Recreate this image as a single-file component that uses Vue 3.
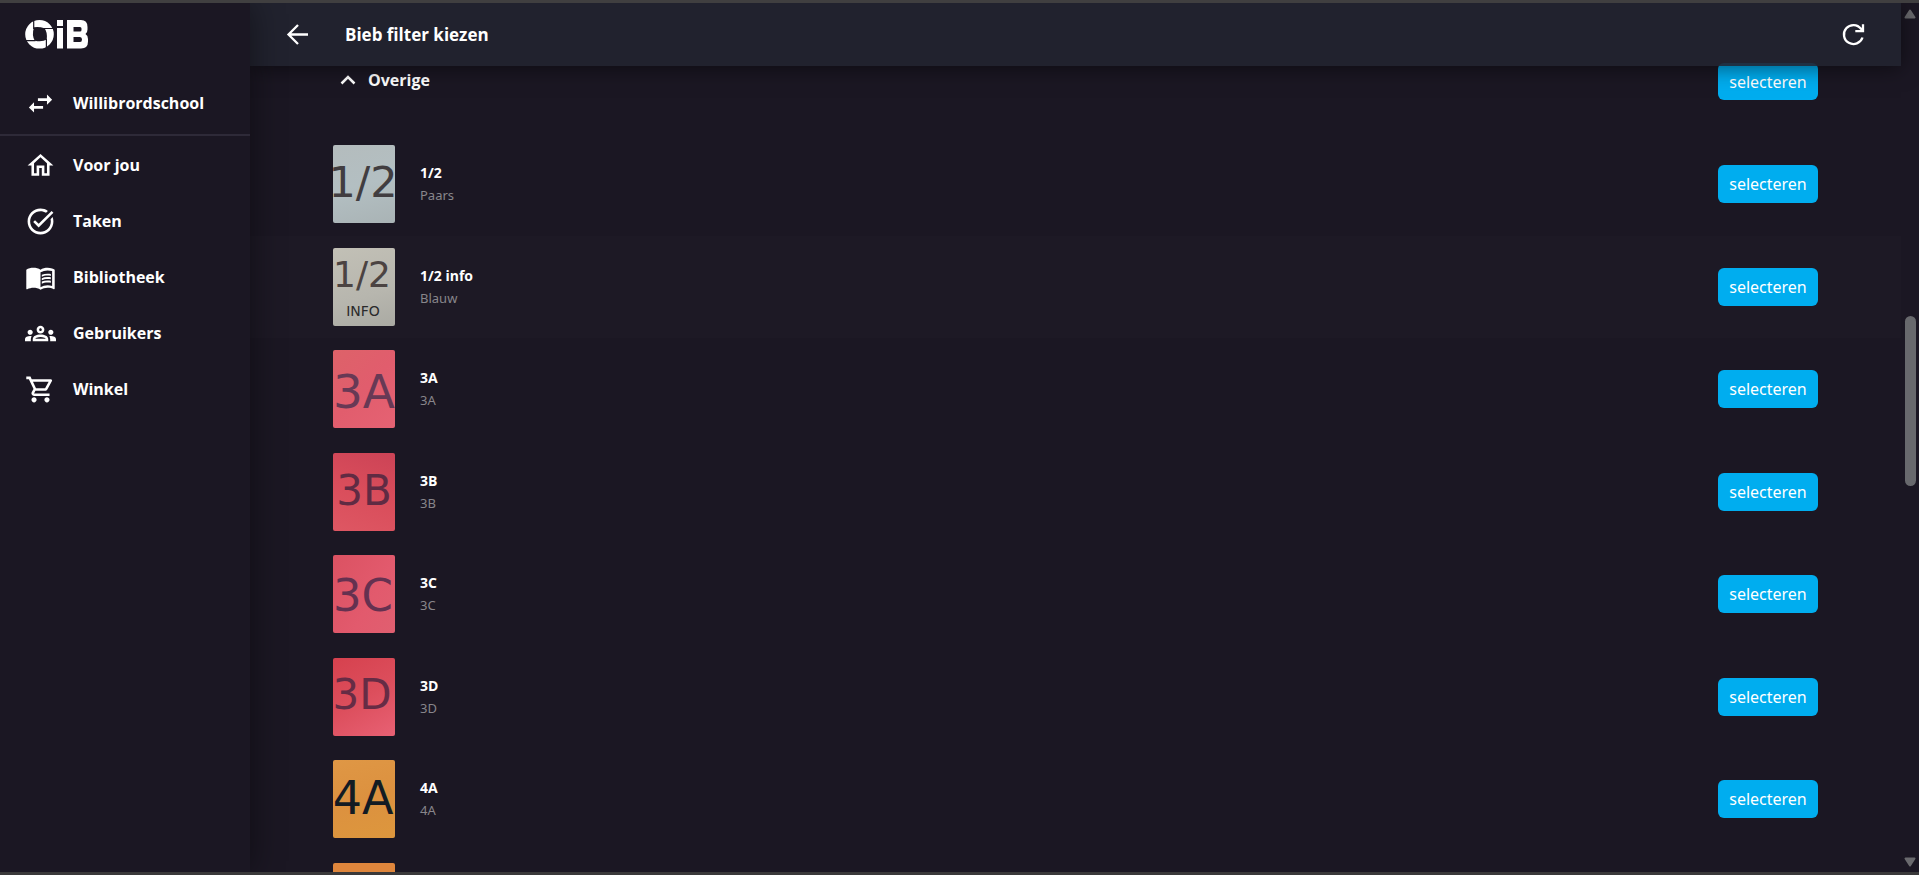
<script setup>
const nav = [
  {
    label: 'Voor jou',
    icon: 'M12 5.69l5 4.5V18h-2v-6H9v6H7v-7.81l5-4.5M12 3L2 12h3v8h6v-6h2v6h6v-8h3L12 3z',
  },
  {
    label: 'Taken',
    icon: 'M22 5.18L10.59 16.6l-4.24-4.24 1.41-1.41 2.83 2.83 10-10L22 5.18zm-2.21 5.04c.13.57.21 1.17.21 1.78 0 4.42-3.58 8-8 8s-8-3.58-8-8 3.58-8 8-8c1.58 0 3.04.46 4.28 1.25l1.44-1.44C16.1 2.67 14.13 2 12 2 6.48 2 2 6.48 2 12s4.48 10 10 10 10-4.48 10-10c0-1.19-.22-2.33-.6-3.39l-1.61 1.61z',
  },
  {
    label: 'Bibliotheek',
    icon: 'M21 5c-1.11-.35-2.33-.5-3.5-.5-1.95 0-4.05.4-5.5 1.5-1.45-1.1-3.55-1.5-5.5-1.5S2.45 4.9 1 6v14.65c0 .25.25.5.5.5.1 0 .15-.05.25-.05C3.1 20.45 5.05 20 6.5 20c1.95 0 4.05.4 5.5 1.5 1.35-.85 3.8-1.5 5.5-1.5 1.65 0 3.35.3 4.75 1.05.1.05.15.05.25.05.25 0 .5-.25.5-.5V6c-.6-.45-1.25-.75-2-1zm0 13.5c-1.1-.35-2.3-.5-3.5-.5-1.7 0-4.15.65-5.5 1.5V8c1.35-.85 3.8-1.5 5.5-1.5 1.2 0 2.4.15 3.5.5v11.5zM17.5 10.5c.88 0 1.73.09 2.5.26V9.24c-.79-.15-1.64-.24-2.5-.24-1.7 0-3.24.29-4.5.83v1.66c1.13-.64 2.7-.99 4.5-.99zM13 12.49v1.66c1.13-.64 2.7-.99 4.5-.99.88 0 1.73.09 2.5.26V11.9c-.79-.15-1.64-.24-2.5-.24-1.7 0-3.24.3-4.5.83zM17.5 14.33c-1.7 0-3.24.29-4.5.83v1.66c1.13-.64 2.7-.99 4.5-.99.88 0 1.73.09 2.5.26v-1.52c-.79-.16-1.64-.24-2.5-.24z',
  },
  {
    label: 'Gebruikers',
    icon: 'M4 13c1.1 0 2-.9 2-2s-.9-2-2-2-2 .9-2 2 .9 2 2 2zm1.13 1.1c-.37-.06-.74-.1-1.13-.1-.99 0-1.93.21-2.78.58C.48 14.9 0 15.62 0 16.43V18h4.5v-1.61c0-.83.23-1.61.63-2.29zM20 13c1.1 0 2-.9 2-2s-.9-2-2-2-2 .9-2 2 .9 2 2 2zm4 3.43c0-.81-.48-1.53-1.22-1.85-.85-.37-1.79-.58-2.78-.58-.39 0-.76.04-1.13.1.4.68.63 1.46.63 2.29V18H24v-1.57zM16.24 13.65c-1.17-.52-2.61-.9-4.24-.9-1.63 0-3.07.39-4.24.9C6.68 14.13 6 15.21 6 16.39V18h12v-1.61c0-1.18-.68-2.26-1.76-2.74zM8.07 16c.09-.23.13-.39.91-.69.97-.38 1.99-.56 3.02-.56s2.05.18 3.02.56c.77.3.81.46.91.69H8.07zM12 8c.55 0 1 .45 1 1s-.45 1-1 1-1-.45-1-1 .45-1 1-1m0-2c-1.66 0-3 1.34-3 3s1.34 3 3 3 3-1.34 3-3-1.34-3-3-3z',
  },
  {
    label: 'Winkel',
    icon: 'M15.55 13c.75 0 1.41-.41 1.75-1.03l3.58-6.49c.37-.66-.11-1.48-.87-1.48H5.21l-.94-2H1v2h2l3.6 7.59-1.35 2.44C4.52 15.37 5.48 17 7 17h12v-2H7l1.1-2h7.45zM6.16 6h12.15l-2.76 5H8.53L6.16 6zM7 18c-1.1 0-1.99.9-1.99 2S5.9 22 7 22s2-.9 2-2-.9-2-2-2zm10 0c-1.1 0-1.99.9-1.99 2s.89 2 1.99 2 2-.9 2-2-.9-2-2-2z',
  },
]

const items = [
  { title: '1/2', sub: 'Paars', tone: 'grey', x: 30, y: 52, size: 43 },
  { title: '1/2 info', sub: 'Blauw', tone: 'sand', text: '1/2', x: 29, y: 39, size: 36, extra: 'INFO', active: true },
  { title: '3A', sub: '3A', tone: 'pink', x: 31, y: 58, size: 47 },
  { title: '3B', sub: '3B', tone: 'red', x: 31, y: 52, size: 42 },
  { title: '3C', sub: '3C', tone: 'rose', x: 30, y: 56, size: 45 },
  { title: '3D', sub: '3D', tone: 'crimson', x: 29, y: 51, size: 42 },
  { title: '4A', sub: '4A', tone: 'orange', x: 30, y: 54, size: 46 },
]
</script>

<template>
  <div class="app">
    <aside class="sidebar">
      <svg class="logo" viewBox="0 0 63 29" role="img" aria-label="OiB">
        <path
          fill="#fff"
          fill-rule="evenodd"
          d="M14.5 0a14.3 14.3 0 1 1 0 28.6a14.3 14.3 0 1 1 0-28.6zM9 7.200Q14 6.200 19.500 8.300Q22.500 12 21.800 19.500Q17.500 22.300 9.800 20.800Q6.500 15 9 7.200z"
        />
        <path stroke="#1b1723" stroke-width="1.200" fill="none" d="M8.700 0V9M29 8.500H19M21.400 29V19M0 20.600H10.500" />
        <path
          fill="#fff"
          fill-rule="evenodd"
          d="M32 0h6v6h-6zM32 8h6v20.600h-6zM42 0h14q6.500 0 6.500 7v2.500q0 3-2 4.500q2.500 1.500 2.500 5v2.600q0 7-7 7H42zM48.500 7v4.500h6.500q1.500 0 1.500-1.500V8.500q0-1.500-1.500-1.500zM48.500 17v5h6.500q2 0 2-2.500t-2-2.500z"
        />
      </svg>
      <a class="nav-item school" href="#">
        <svg viewBox="0 0 24 24" aria-hidden="true">
          <path d="M6.990 11L3 15l3.990 4v-3H14v-2H6.990v-3zM21 9l-3.990-4v3H10v2h7.010v3L21 9z" />
        </svg>
        <span>Willibrordschool</span>
      </a>
      <nav>
        <a v-for="item in nav" :key="item.label" class="nav-item" href="#">
          <svg viewBox="0 0 24 24" aria-hidden="true"><path :d="item.icon" /></svg>
          <span>{{ item.label }}</span>
        </a>
      </nav>
    </aside>

    <main class="main">
      <header class="topbar">
        <button class="icon-button" type="button" aria-label="Terug">
          <svg viewBox="0 0 24 24" aria-hidden="true"><path d="M23 11.500H4M13 2L3.500 11.500l9.500 9.500" /></svg>
        </button>
        <h1>Bieb filter kiezen</h1>
        <button class="icon-button" type="button" aria-label="Vernieuwen">
          <svg viewBox="0 0 24 24" aria-hidden="true">
            <path d="M21.500 14.500a9.500 9.500 0 1 1-1.500-8.700l1.700 1.900M22 1.300v6.900H14.300" />
          </svg>
        </button>
      </header>

      <section class="content">
        <div class="group">
          <button class="toggle" type="button" aria-expanded="true">
            <svg viewBox="0 0 16 10" aria-hidden="true"><path d="M1.500 8.500L8 2l6.500 6.500" /></svg>
            <span>Overige</span>
          </button>
          <button class="select" type="button">selecteren</button>
        </div>
        <ul class="list">
          <li v-for="item in items" :key="item.title" class="row" :class="{ active: item.active }">
            <svg class="thumb" :class="item.tone" viewBox="0 0 62 78" aria-hidden="true">
              <text :x="item.x" :y="item.y" :font-size="item.size" text-anchor="middle">{{ item.text || item.title }}</text>
              <text v-if="item.extra" class="extra" x="30" y="68" font-size="14" text-anchor="middle">{{ item.extra }}</text>
            </svg>
            <div class="info">
              <strong>{{ item.title }}</strong>
              <span>{{ item.sub }}</span>
            </div>
            <button class="select" type="button">selecteren</button>
          </li>
          <li class="row">
            <div class="thumb amber"></div>
          </li>
        </ul>
      </section>
    </main>

    <div class="scrollbar" aria-hidden="true">
      <svg viewBox="0 0 12 10"><path d="M6 1.500L10.500 8.500h-9z" /></svg>
      <div class="track"><div class="grip"></div></div>
      <svg viewBox="0 0 12 10"><path d="M6 8.500L1.500 1.500h9z" /></svg>
    </div>
  </div>
</template>

<style>
body {
  margin: 0;
  background: #1b1723;
}
</style>

<style scoped>
.app {
  box-sizing: border-box;
  display: flex;
  height: 100vh;
  overflow: hidden;
  border-top: 3px solid #403f40;
  border-bottom: 3px solid #3a393a;
  background: #1b1723;
  color: #fff;
  font-family: "Noto Sans", "Open Sans", sans-serif;
}

button {
  margin: 0;
  padding: 0;
  border: 0;
  background: none;
  color: inherit;
  font: inherit;
  cursor: pointer;
}

svg {
  display: block;
  flex: none;
}

.sidebar {
  position: relative;
  z-index: 3;
  flex: none;
  width: 250px;
  background: #1b1723;
  box-shadow: 0 0 32px rgba(0, 0, 0, 0.45);
}

.logo {
  width: 63px;
  height: 29px;
  margin: 17px 0 23px 25px;
}

.nav-item {
  display: flex;
  align-items: center;
  gap: 17px;
  height: 56px;
  padding-left: 25px;
  color: #fff;
  font-family: "Open Sans", "Noto Sans", sans-serif;
  font-size: 16px;
  font-weight: 700;
  text-decoration: none;
}

.nav-item svg {
  width: 31px;
  height: 31px;
  fill: #fff;
}

.school {
  height: 62px;
  border-bottom: 2px solid #2e2a38;
}

nav {
  padding-top: 1px;
}

.main {
  flex: 1;
  min-width: 0;
  display: flex;
  flex-direction: column;
}

.topbar {
  position: relative;
  z-index: 2;
  flex: none;
  display: flex;
  align-items: center;
  height: 63px;
  padding: 0 36px 0 35px;
  background: rgba(34, 36, 48, 0.9);
  box-shadow: 0 2px 20px rgba(0, 0, 0, 0.5);
}

.topbar h1 {
  flex: 1;
  margin: 0 0 0 36px;
  font-family: "Open Sans", "Noto Sans", sans-serif;
  font-size: 17px;
  font-weight: 700;
}

.icon-button svg {
  width: 24px;
  height: 24px;
  fill: none;
  stroke: #fff;
  stroke-width: 2.300;
}

.content {
  flex: 1;
  min-height: 0;
  margin-top: -3px;
  overflow: hidden;
}

.group {
  display: flex;
  align-items: flex-start;
  justify-content: space-between;
  height: 70px;
  padding: 0 83px 0 90px;
}

.toggle {
  display: flex;
  align-items: center;
  gap: 12px;
  height: 33px;
  font-family: "Open Sans", "Noto Sans", sans-serif;
  font-size: 16px;
  font-weight: 700;
}

.toggle svg {
  width: 16px;
  height: 10px;
  fill: none;
  stroke: #fff;
  stroke-width: 2.500;
}

.list {
  display: grid;
  grid-auto-rows: 103px 102px;
  margin: 0;
  padding: 0;
  list-style: none;
}

.row {
  display: flex;
  align-items: flex-start;
  padding: 12px 83px 0;
}

.active {
  background: #1d1925;
}

.thumb {
  width: 62px;
  height: 78px;
  border-radius: 2px;
  font-family: "DejaVu Sans", sans-serif;
}

.grey {
  background: linear-gradient(165deg, #b4bcbd, #b3bfc2 50%, #a9b3b5);
  fill: #413d40;
}

.sand {
  background: linear-gradient(165deg, #c2c0b6, #b7b6ae 60%, #aaaaa3);
  fill: #4b4342;
}

.extra {
  fill: #2b2a2b;
}

.pink {
  background: linear-gradient(135deg, #dd6269, #e15d6d 50%, #e56273);
  fill: #683955;
}

.red {
  background: linear-gradient(200deg, #cc4356, #d94d5b 50%, #de5763);
  fill: #602b43;
}

.rose {
  background: linear-gradient(120deg, #db5262, #e25a6d 60%, #e05f70);
  fill: #653150;
}

.crimson {
  background: linear-gradient(150deg, #d6414e, #dc4e5c 50%, #e86174);
  fill: #662c45;
}

.orange {
  background: linear-gradient(165deg, #df9745, #dc913f 50%, #dd973d);
  fill: #131b23;
}

.amber {
  background: #df863c;
}

.info {
  flex: 1;
  display: flex;
  flex-direction: column;
  justify-content: center;
  height: 78px;
  margin-left: 25px;
}

.info strong {
  font-family: "Open Sans", "Noto Sans", sans-serif;
  font-size: 14px;
  font-weight: 700;
  line-height: 23px;
}

.info span {
  color: #88868b;
  font-size: 13px;
  line-height: 23px;
}

.select {
  flex: none;
  width: 100px;
  height: 37px;
  border-radius: 6px;
  background: #00adef;
  font-size: 16px;
}

.row .select {
  height: 38px;
  margin-top: 20px;
}

.scrollbar {
  flex: none;
  display: flex;
  flex-direction: column;
  align-items: center;
  justify-content: space-between;
  width: 18px;
  padding: 6px 0 5px;
  box-sizing: border-box;
}

.scrollbar svg {
  width: 12px;
  height: 10px;
  fill: #6a6a6e;
  stroke: #6a6a6e;
  stroke-width: 2;
  stroke-linejoin: round;
}

.track {
  flex: 1;
  display: flex;
  flex-direction: column;
}

.track::before {
  content: "";
  flex: 297;
}

.track::after {
  content: "";
  flex: 371;
}

.grip {
  flex: 170;
  width: 11px;
  border-radius: 6px;
  background: #68696d;
}
</style>
